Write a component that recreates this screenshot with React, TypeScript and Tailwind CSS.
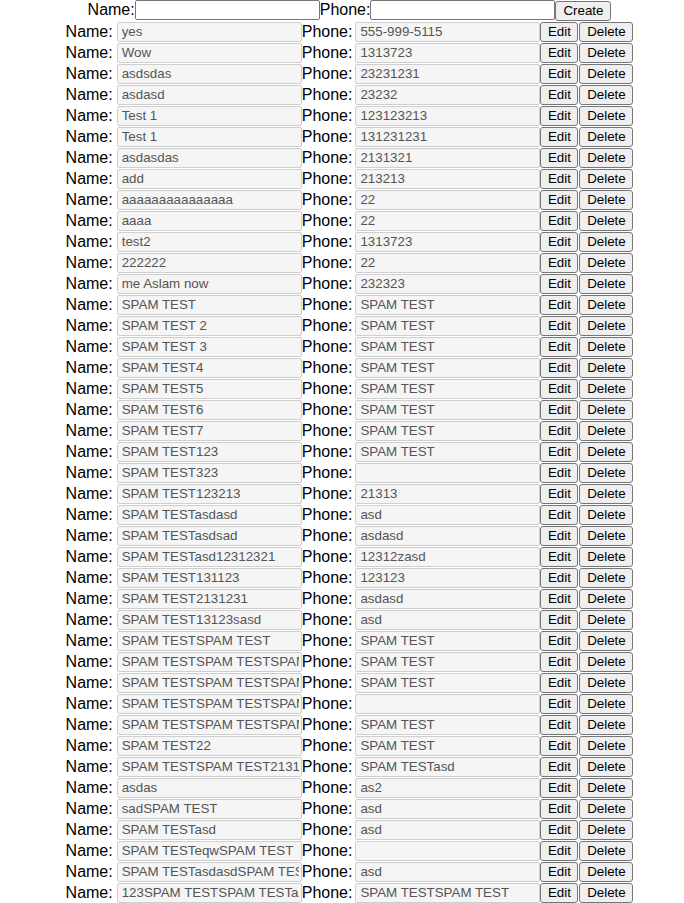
import React, { useState } from 'react';

type Contact = { id: number; name: string; phone: string };

const CONTACTS: Contact[] = [
  ['yes', '555-999-5115'],
  ['Wow', '1313723'],
  ['asdsdas', '23231231'],
  ['asdasd', '23232'],
  ['Test 1', '123123213'],
  ['Test 1', '131231231'],
  ['asdasdas', '2131321'],
  ['add', '213213'],
  ['aaaaaaaaaaaaaaa', '22'],
  ['aaaa', '22'],
  ['test2', '1313723'],
  ['222222', '22'],
  ['me Aslam now', '232323'],
  ['SPAM TEST', 'SPAM TEST'],
  ['SPAM TEST 2', 'SPAM TEST'],
  ['SPAM TEST 3', 'SPAM TEST'],
  ['SPAM TEST4', 'SPAM TEST'],
  ['SPAM TEST5', 'SPAM TEST'],
  ['SPAM TEST6', 'SPAM TEST'],
  ['SPAM TEST7', 'SPAM TEST'],
  ['SPAM TEST123', 'SPAM TEST'],
  ['SPAM TEST323', ''],
  ['SPAM TEST123213', '21313'],
  ['SPAM TESTasdasd', 'asd'],
  ['SPAM TESTasdsad', 'asdasd'],
  ['SPAM TESTasd12312321', '12312zasd'],
  ['SPAM TEST131123', '123123'],
  ['SPAM TEST2131231', 'asdasd'],
  ['SPAM TEST13123sasd', 'asd'],
  ['SPAM TESTSPAM TEST', 'SPAM TEST'],
  ['SPAM TESTSPAM TESTSPAM TEST', 'SPAM TEST'],
  ['SPAM TESTSPAM TESTSPAM TEST2', 'SPAM TEST'],
  ['SPAM TESTSPAM TESTSPAM TEST3', ''],
  ['SPAM TESTSPAM TESTSPAM TEST4', 'SPAM TEST'],
  ['SPAM TEST22', 'SPAM TEST'],
  ['SPAM TESTSPAM TEST2131231', 'SPAM TESTasd'],
  ['asdas', 'as2'],
  ['sadSPAM TEST', 'asd'],
  ['SPAM TESTasd', 'asd'],
  ['SPAM TESTeqwSPAM TEST', ''],
  ['SPAM TESTasdasdSPAM TEST', 'asd'],
  ['123SPAM TESTSPAM TESTasd', 'SPAM TESTSPAM TEST'],
].map(([name, phone], i) => ({ id: i + 1, name, phone }));

const font = "font-['Liberation_Sans',Arial,sans-serif]";
const btn = `h-[20px] px-[6px] bg-[#efefef] border border-[#767676] rounded-[3px] text-[13.33px] leading-none text-black ${font}`;
const field =
  'w-[185px] h-[20px] border border-[#cfcfcf] rounded-[2px] pl-[4px] pr-[2px] text-[13.33px] bg-[#f5f5f5] text-[#545454]';

export default function App() {
  const [contacts, setContacts] = useState(CONTACTS);
  const [name, setName] = useState('');
  const [phone, setPhone] = useState('');

  const create = () => {
    if (!name.trim()) return;
    setContacts([...contacts, { id: Date.now(), name, phone }]);
    setName('');
    setPhone('');
  };

  return (
    <div className={`w-full pl-[15px] bg-white text-black ${font}`}>
      {/* Create form */}
      <div className="flex justify-center items-start h-[21px] text-[16px] leading-[20px]">
        <span>Name:</span>
        <input
          value={name}
          onChange={e => setName(e.target.value)}
          className="w-[185px] h-[20px] border border-[#767676] rounded-[2px] px-[2px] text-[13.33px] bg-white outline-none"
        />
        <span>Phone:</span>
        <input
          value={phone}
          onChange={e => setPhone(e.target.value)}
          className="w-[185px] h-[20px] border border-[#767676] rounded-[2px] px-[2px] text-[13.33px] bg-white outline-none"
        />
        <button onClick={create} className={`${btn} w-[56px] mt-[1px]`}>Create</button>
      </div>

      {/* Contact rows */}
      {contacts.map(c => (
        <div key={c.id} className="flex justify-center items-end h-[21px] text-[16px] leading-[20px]">
          <span className="mr-[4px]">Name:</span>
          <input disabled value={c.name} className={field} />
          <span className="mr-[3px]">Phone:</span>
          <input disabled value={c.phone} className={field} />
          <button className={`${btn} w-[38px]`}>Edit</button>
          <button
            onClick={() => setContacts(contacts.filter(x => x.id !== c.id))}
            className={`${btn} w-[54px] ml-[1px]`}
          >
            Delete
          </button>
        </div>
      ))}
    </div>
  );
}
